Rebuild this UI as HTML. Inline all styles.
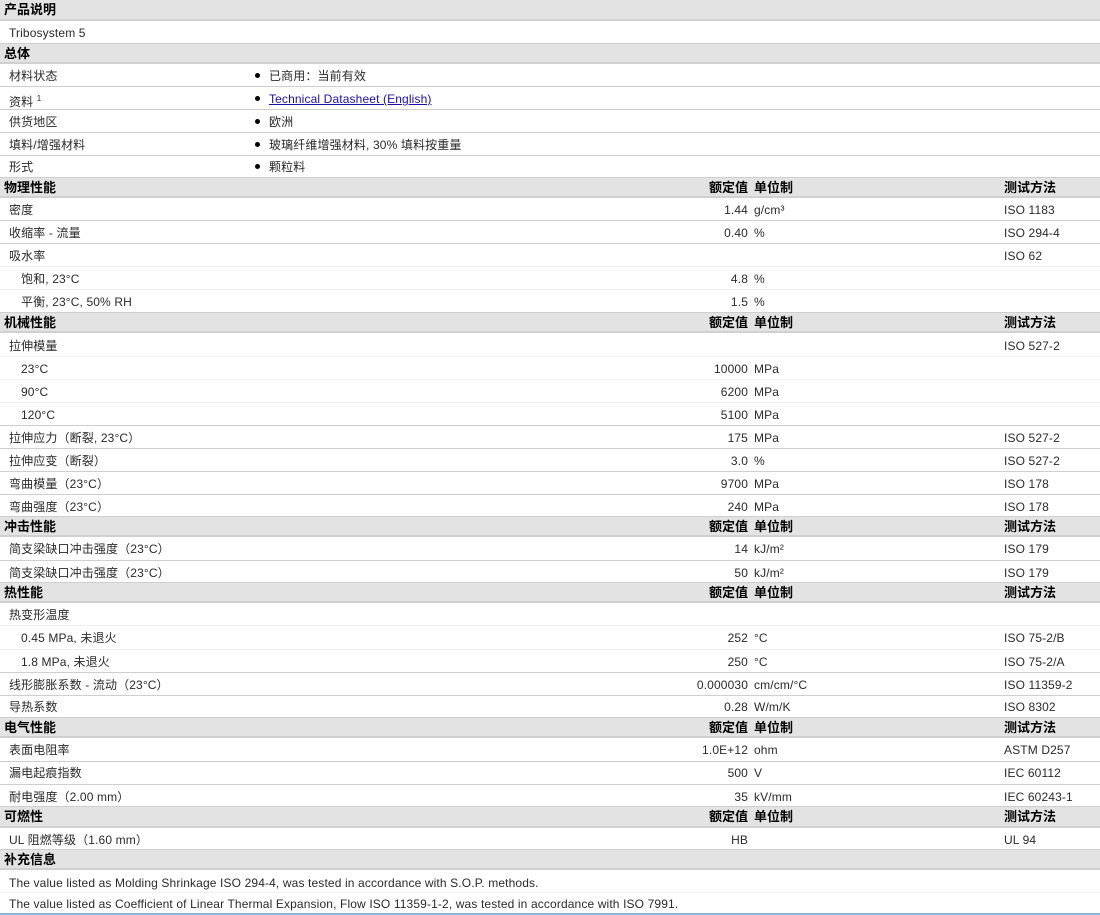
<!DOCTYPE html>
<html><head><meta charset="utf-8"><style>
body{margin:0;width:1100px;height:915px;position:relative;overflow:hidden;background:#fff;font-family:"Liberation Sans","Noto Sans CJK SC",sans-serif;font-size:12px;color:#2a2a2a;letter-spacing:0.13px}
.r{position:absolute;left:0;width:1100px;box-sizing:border-box;border-bottom:1px solid #cfcfcf}
.s{border-bottom:1px solid #f0f0f0}
.h{background:#e3e3e3;border-bottom:2px solid #d0d0d0;font-weight:bold;font-size:13px;color:#000;letter-spacing:0}
.r span{position:absolute;top:0;white-space:nowrap}
.l{left:9px}.ls{left:21px}.hl{left:4px}
.v{right:352px;text-align:right}
.u{left:754px}.t{left:1004px}
.b{left:255px}
.b:before{content:"";display:inline-block;width:5px;height:5px;border-radius:50%;background:#000;margin-right:9px;vertical-align:middle;position:relative;top:-1px}
a{color:#1a0dab;text-decoration:underline}
</style></head><body>
<div class="r h" style="top:0;height:21px;line-height:20px"><span class="hl">产品说明</span></div>
<div class="r" style="top:21px;height:23px;line-height:25px"><span class="l">Tribosystem 5</span></div>
<div class="r h" style="top:44px;height:20px;line-height:19px"><span class="hl">总体</span></div>
<div class="r" style="top:64px;height:23px;line-height:24px"><span class="l">材料状态</span><span class="b">已商用：当前有效</span></div>
<div class="r" style="top:87px;height:23px;line-height:24px"><span class="l">资料 <sup style="font-size:8px">1</sup></span><span class="b"><a>Technical Datasheet (English)</a></span></div>
<div class="r" style="top:110px;height:23px;line-height:24px"><span class="l">供货地区</span><span class="b">欧洲</span></div>
<div class="r" style="top:133px;height:23px;line-height:24px"><span class="l">填料/增强材料</span><span class="b">玻璃纤维增强材料, 30% 填料按重量</span></div>
<div class="r" style="top:156px;height:22px;line-height:23px"><span class="l">形式</span><span class="b">颗粒料</span></div>
<div class="r h" style="top:178px;height:20px;line-height:19px"><span class="hl">物理性能</span><span class="v">额定值</span><span class="u">单位制</span><span class="t">测试方法</span></div>
<div class="r" style="top:198px;height:23px;line-height:25px"><span class="l">密度</span><span class="v">1.44</span><span class="u">g/cm³</span><span class="t">ISO 1183</span></div>
<div class="r" style="top:221px;height:23px;line-height:25px"><span class="l">收缩率 - 流量</span><span class="v">0.40</span><span class="u">%</span><span class="t">ISO 294-4</span></div>
<div class="r s" style="top:244px;height:23px;line-height:25px"><span class="l">吸水率</span><span class="t">ISO 62</span></div>
<div class="r s" style="top:267px;height:23px;line-height:25px"><span class="ls">饱和, 23°C</span><span class="v">4.8</span><span class="u">%</span></div>
<div class="r" style="top:290px;height:23px;line-height:25px"><span class="ls">平衡, 23°C, 50% RH</span><span class="v">1.5</span><span class="u">%</span></div>
<div class="r h" style="top:313px;height:20px;line-height:19px"><span class="hl">机械性能</span><span class="v">额定值</span><span class="u">单位制</span><span class="t">测试方法</span></div>
<div class="r s" style="top:333px;height:24px;line-height:26px"><span class="l">拉伸模量</span><span class="t">ISO 527-2</span></div>
<div class="r s" style="top:357px;height:23px;line-height:24px"><span class="ls">23°C</span><span class="v">10000</span><span class="u">MPa</span></div>
<div class="r s" style="top:380px;height:23px;line-height:24px"><span class="ls">90°C</span><span class="v">6200</span><span class="u">MPa</span></div>
<div class="r" style="top:403px;height:23px;line-height:24px"><span class="ls">120°C</span><span class="v">5100</span><span class="u">MPa</span></div>
<div class="r" style="top:426px;height:23px;line-height:24px"><span class="l">拉伸应力（断裂, 23°C）</span><span class="v">175</span><span class="u">MPa</span><span class="t">ISO 527-2</span></div>
<div class="r" style="top:449px;height:23px;line-height:24px"><span class="l">拉伸应变（断裂）</span><span class="v">3.0</span><span class="u">%</span><span class="t">ISO 527-2</span></div>
<div class="r" style="top:472px;height:23px;line-height:24px"><span class="l">弯曲模量（23°C）</span><span class="v">9700</span><span class="u">MPa</span><span class="t">ISO 178</span></div>
<div class="r" style="top:495px;height:22px;line-height:24px"><span class="l">弯曲强度（23°C）</span><span class="v">240</span><span class="u">MPa</span><span class="t">ISO 178</span></div>
<div class="r h" style="top:517px;height:20px;line-height:19px"><span class="hl">冲击性能</span><span class="v">额定值</span><span class="u">单位制</span><span class="t">测试方法</span></div>
<div class="r" style="top:537px;height:24px;line-height:25px"><span class="l">简支梁缺口冲击强度（23°C）</span><span class="v">14</span><span class="u">kJ/m²</span><span class="t">ISO 179</span></div>
<div class="r" style="top:561px;height:22px;line-height:24px"><span class="l">简支梁缺口冲击强度（23°C）</span><span class="v">50</span><span class="u">kJ/m²</span><span class="t">ISO 179</span></div>
<div class="r h" style="top:583px;height:20px;line-height:19px"><span class="hl">热性能</span><span class="v">额定值</span><span class="u">单位制</span><span class="t">测试方法</span></div>
<div class="r s" style="top:603px;height:23px;line-height:24px"><span class="l">热变形温度</span></div>
<div class="r s" style="top:626px;height:24px;line-height:24px"><span class="ls">0.45 MPa, 未退火</span><span class="v">252</span><span class="u">°C</span><span class="t">ISO 75-2/B</span></div>
<div class="r" style="top:650px;height:23px;line-height:24px"><span class="ls">1.8 MPa, 未退火</span><span class="v">250</span><span class="u">°C</span><span class="t">ISO 75-2/A</span></div>
<div class="r" style="top:673px;height:23px;line-height:24px"><span class="l">线形膨胀系数 - 流动（23°C）</span><span class="v">0.000030</span><span class="u">cm/cm/°C</span><span class="t">ISO 11359-2</span></div>
<div class="r" style="top:696px;height:22px;line-height:23px"><span class="l">导热系数</span><span class="v">0.28</span><span class="u">W/m/K</span><span class="t">ISO 8302</span></div>
<div class="r h" style="top:718px;height:20px;line-height:19px"><span class="hl">电气性能</span><span class="v">额定值</span><span class="u">单位制</span><span class="t">测试方法</span></div>
<div class="r" style="top:738px;height:24px;line-height:24px"><span class="l">表面电阻率</span><span class="v">1.0E+12</span><span class="u">ohm</span><span class="t">ASTM D257</span></div>
<div class="r" style="top:762px;height:23px;line-height:23px"><span class="l">漏电起痕指数</span><span class="v">500</span><span class="u">V</span><span class="t">IEC 60112</span></div>
<div class="r" style="top:785px;height:22px;line-height:24px"><span class="l">耐电强度（2.00 mm）</span><span class="v">35</span><span class="u">kV/mm</span><span class="t">IEC 60243-1</span></div>
<div class="r h" style="top:807px;height:21px;line-height:20px"><span class="hl">可燃性</span><span class="v">额定值</span><span class="u">单位制</span><span class="t">测试方法</span></div>
<div class="r" style="top:828px;height:22px;line-height:24px"><span class="l">UL 阻燃等级（1.60 mm）</span><span class="v">HB</span><span class="t">UL 94</span></div>
<div class="r h" style="top:850px;height:20px;line-height:19px"><span class="hl">补充信息</span></div>
<div class="r s" style="top:870px;height:23px;line-height:26px"><span class="l">The value listed as Molding Shrinkage ISO 294-4, was tested in accordance with S.O.P. methods.</span></div>
<div class="r" style="top:893px;height:22px;line-height:22px;border-bottom:2px solid #8fb4d6"><span class="l">The value listed as Coefficient of Linear Thermal Expansion, Flow ISO 11359-1-2, was tested in accordance with ISO 7991.</span></div>
</body></html>
